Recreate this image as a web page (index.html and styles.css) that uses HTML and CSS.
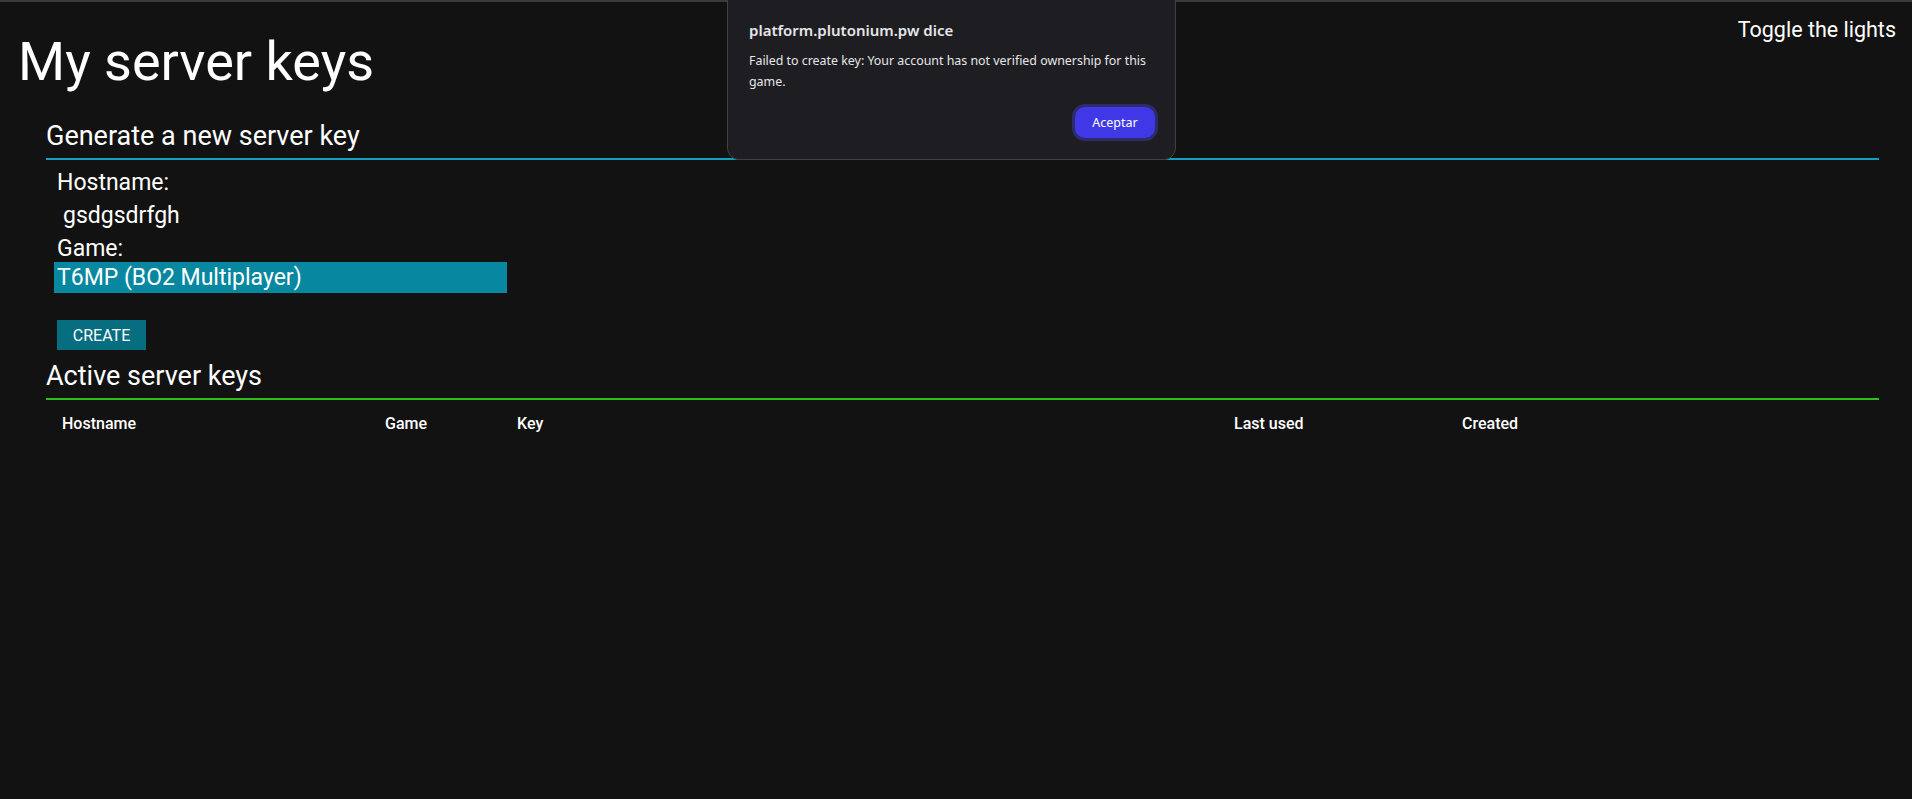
FILE: index.html
```html
<!DOCTYPE html>
<html lang="en">
<head>
<meta charset="utf-8">
<title>My server keys</title>
<link rel="stylesheet" href="styles.css">
</head>
<body>
<div class="topstrip"></div>
<header class="header">
  <h1 class="title">My server keys</h1>
  <a class="toggle">Toggle the lights</a>
</header>
<main class="content">
  <section class="panel">
    <h2 class="panel-title panel-title--cyan">Generate a new server key</h2>
    <form class="form">
      <label class="label">Hostname:</label>
      <input class="text-input" type="text" value="gsdgsdrfgh">
      <label class="label">Game:</label>
      <div class="select">T6MP (BO2 Multiplayer)</div>
      <button class="create-btn" type="button">CREATE</button>
    </form>
  </section>
  <section class="panel">
    <h2 class="panel-title panel-title--green">Active server keys</h2>
    <div class="table-head">
      <div class="th">Hostname</div>
      <div class="th">Game</div>
      <div class="th">Key</div>
      <div class="th">Last used</div>
      <div class="th">Created</div>
    </div>
  </section>
</main>
<div class="dialog">
  <div class="dialog-title">platform.plutonium.pw dice</div>
  <div class="dialog-msg">Failed to create key: Your account has not verified ownership for this game.</div>
  <div class="dialog-actions">
    <button class="dialog-btn" type="button">Aceptar</button>
  </div>
</div>
</body>
</html>
```
FILE: styles.css
```css
html, body {
  margin: 0;
  padding: 0;
  background: #121212;
  color: #ffffff;
  font-family: Roboto, "Liberation Sans", sans-serif;
}
body {
  height: 799px;
  overflow: hidden;
}
.topstrip {
  height: 2px;
  background: #3a3a3e;
}
.header {
  display: flex;
  justify-content: space-between;
  align-items: flex-start;
  padding: 16px 16px 0 18px;
}
.title {
  margin: 12px 0 0;
  font-size: 54px;
  font-weight: 400;
  line-height: 64px;
}
.toggle {
  font-size: 21.5px;
  line-height: 24px;
  color: #ffffff;
  cursor: pointer;
}
.content {
  margin: 29px 33px 0 46px;
}
.panel-title {
  margin: 0;
  font-size: 27px;
  font-weight: 400;
  line-height: 27px;
  padding-bottom: 8px;
}
.panel-title--cyan {
  border-bottom: 2px solid #0ea2bb;
}
.panel-title--green {
  border-bottom: 2px solid #2fbd1c;
}
.form {
  display: flex;
  flex-direction: column;
  align-items: flex-start;
  padding: 10px 0 0 11px;
}
.label {
  font-size: 23px;
  line-height: 26px;
}
.text-input {
  margin: 6px 0 6px 0;
  padding: 0 6px;
  background: transparent;
  border: none;
  outline: none;
  color: #ffffff;
  font-family: Roboto, "Liberation Sans", sans-serif;
  font-size: 23px;
  line-height: 28px;
  height: 28px;
  width: 300px;
}
.select {
  margin: 0 0 0 -3px;
  width: 450px;
  height: 31px;
  padding-left: 3px;
  background: #0787a0;
  font-size: 23px;
  line-height: 31px;
}
.create-btn {
  margin-top: 27px;
  width: 89px;
  height: 30px;
  background: #066e80;
  color: #ffffff;
  border: none;
  font-family: Roboto, "Liberation Sans", sans-serif;
  font-size: 16px;
  font-weight: 400;
  padding: 0;
}
.panel + .panel {
  margin-top: 13px;
}
.table-head {
  display: grid;
  grid-template-columns: 323px 132px 717px 228px 1fr;
  padding: 14px 0 0 16px;
}
.th {
  font-size: 16px;
  font-weight: 500;
  line-height: 20px;
}
.dialog {
  position: absolute;
  left: 727px;
  top: -12px;
  width: 449px;
  height: 172px;
  box-sizing: border-box;
  background: #1e1e22;
  border: 1px solid #404045;
  border-radius: 12px;
  padding: 31px 20px 0 21px;
  font-family: "Noto Sans", "Open Sans", sans-serif;
  color: #e6e6e8;
  display: flex;
  flex-direction: column;
}
.dialog-title {
  font-size: 15px;
  font-weight: 600;
  line-height: 20px;
}
.dialog-msg {
  margin-top: 10px;
  font-size: 12.4px;
  line-height: 21px;
}
.dialog-actions {
  display: flex;
  justify-content: flex-end;
  margin-top: 15px;
}
.dialog-btn {
  width: 80px;
  height: 31px;
  background: #4038e6;
  border: none;
  border-radius: 10px;
  box-shadow: 0 0 0 3px #2c2c6c;
  color: #ffffff;
  font-family: "Noto Sans", "Open Sans", sans-serif;
  font-size: 12.5px;
  padding: 0;
}
```
